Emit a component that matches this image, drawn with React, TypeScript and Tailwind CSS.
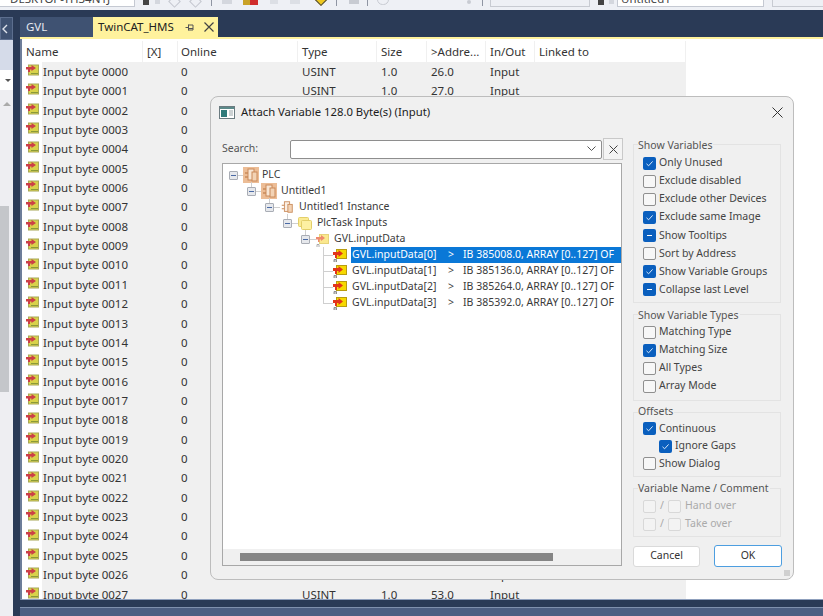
const font = "font-['Noto_Sans','Open_Sans',sans-serif]"

function VarIcon({ className = "" }: { className?: string }) {
  return (
    <svg width="13" height="12" viewBox="0 0 13 12" className={className}>
      <rect x="2.500" y="1" width="10" height="10" fill="#d8d24a" stroke="#a8a858" strokeWidth="1" />
      <path d="M0 3h5.500V1l4.500 3-4.500 3V5.500H4V8H2V5.500H0z" fill="#cc3f46" />
      <path d="M5 9.500h7" stroke="#8a9a38" strokeWidth="1" />
    </svg>
  )
}

function TreeVarIcon() {
  return (
    <svg width="14" height="16" viewBox="0 0 14 16" className="shrink-0">
      <rect x="3.500" y="2.500" width="10" height="9" fill="#f6d800" stroke="#b89c10" strokeWidth="1" />
      <path d="M0 5h5.500V3L10 6.500 5.500 10V8H4v3H2V8H0z" fill="#e2341a" />
      <path d="M1 15v-2.500h2.500V15M1 14h2.500" stroke="#777" strokeWidth="0.800" fill="none" />
    </svg>
  )
}

function Expander({ stem }: { stem?: boolean }) {
  return (
    <span className="relative flex h-[9px] w-[9px] shrink-0 items-center justify-center rounded-[1px] border border-[#a9adb5] bg-[#e6e8ec]">
      <span className="h-px w-[5px] bg-[#4a6aa5]" />
      {stem && <span className="absolute -top-[6px] left-[3px] h-[5px] w-px bg-[#cfcfcf]" />}
    </span>
  )
}

function Link({ w }: { w: string }) {
  return <span className={`h-px shrink-0 bg-[#cfcfcf] ${w}`} />
}

function PlcIcon({ size, faded }: { size: number; faded?: boolean }) {
  return (
    <svg width={size} height={size} viewBox="0 0 16 16" className="shrink-0">
      {!faded && <rect width="16" height="16" fill="#ecbd96" />}
      <rect x="5" y="2" width="6" height="11" fill={faded ? "#fbeee2" : "#f8e6d4"} stroke="#c98a5a" strokeWidth="1" />
      <rect x="9" y="5" width="5" height="9" fill="#f3d3b5" stroke="#c98a5a" strokeWidth="1" />
      <path d="M2 6h3M2 10h3" stroke="#c98a5a" strokeWidth="1.400" />
    </svg>
  )
}

function Check({ state, disabled }: { state?: "check" | "dash"; disabled?: boolean }) {
  if (state) {
    return (
      <span className="flex h-[13px] w-[13px] shrink-0 items-center justify-center rounded-[2px] bg-[#0a5fbe]">
        {state === "check" ? (
          <svg width="9" height="9" viewBox="0 0 9 9">
            <path d="M1.500 4.800 3.600 6.800 7.600 2.400" fill="none" stroke="#d8e8fa" strokeWidth="1" />
          </svg>
        ) : (
          <span className="h-px w-[5px] bg-white" />
        )}
      </span>
    )
  }
  return <span className={`h-[13px] w-[13px] shrink-0 rounded-[2px] border ${disabled ? "border-[#d8d8d8] bg-[#f3f3f3]" : "border-[#8f8f8f] bg-[#f7f7f7]"}`} />
}

function Option({ label, state, indent, h = "h-[18.1px]" }: { label: string; state?: "check" | "dash"; indent?: boolean; h?: string }) {
  return (
    <div className={`flex items-center gap-[3px] ${h} ${indent ? "pl-[16px]" : ""}`}>
      <Check state={state} />
      <span className="whitespace-nowrap">{label}</span>
    </div>
  )
}

function Group({ title, className, top = "-top-[8px]", children }: { title: string; className: string; top?: string; children: React.ReactNode }) {
  return (
    <div className={`relative w-[148px] border border-[#e3e3e3] pl-[9px] ${className}`}>
      <span className={`absolute left-[4px] bg-[#f0f0f0] pr-[1px] leading-[15px] whitespace-nowrap text-[#555] ${top}`}>{title}</span>
      {children}
    </div>
  )
}

const columns = [
  { label: "Name", w: "w-[121px]", pl: "pl-[4px]" },
  { label: "[X]", w: "w-[35px]", pl: "pl-[4px]" },
  { label: "Online", w: "w-[120px]", pl: "pl-[3px]" },
  { label: "Type", w: "w-[79px]", pl: "pl-[4px]" },
  { label: "Size", w: "w-[50px]", pl: "pl-[4px]" },
  { label: ">Addre...", w: "w-[59px]", pl: "pl-[4px]" },
  { label: "In/Out", w: "w-[49px]", pl: "pl-[4px]" },
  { label: "Linked to", w: "w-[151px]", pl: "pl-[4px]" },
]

const rows = Array.from({ length: 28 }, (_, i) => i)

const treeVars = [
  { addr: "385008.0", idx: 0 },
  { addr: "385136.0", idx: 1 },
  { addr: "385264.0", idx: 2 },
  { addr: "385392.0", idx: 3 },
]

function AttachDialog() {
  return (
    <div className="absolute left-[210px] top-[96px] h-[484px] w-[584px] rounded-[8px] border border-[#bdbdbd] bg-[#f0f0f0] text-[10.5px] text-[#444]">
      {/* title */}
      <div className="flex h-[31px] items-center pl-[8px] text-[11.3px] text-[#1c1c1c]">
        <svg width="16" height="13" viewBox="0 0 16 13" className="mr-[6px]">
          <rect x="0.500" y="0.500" width="15" height="12" fill="#fff" stroke="#6b7b80" />
          <rect x="1" y="1" width="14" height="2" fill="#5c8a8a" />
          <rect x="2" y="4" width="6" height="7" fill="#2f7a7a" />
          <path d="M10 5h4M10 7h4M10 9h4" stroke="#9aa5a8" />
        </svg>
        Attach Variable 128.0 Byte(s) (Input)
        <svg width="11" height="11" viewBox="0 0 11 11" className="ml-auto mr-[10px]">
          <path d="M0.500 0.500l10 10M10.500 0.500l-10 10" stroke="#333" strokeWidth="1" />
        </svg>
      </div>
      <div className="flex pl-[11px] pt-[10px]">
        {/* left column */}
        <div className="w-[401px] shrink-0">
          <div className="flex items-center">
            <span className="w-[68px] text-[#555]">Search:</span>
            <div className="flex h-[19px] w-[313px] items-center justify-end rounded-[2px] border border-[#8e8e8e] bg-white pr-[5px]">
              <svg width="9" height="6" viewBox="0 0 9 6">
                <path d="M0.500 0.500 4.500 4.500 8.500 0.500" fill="none" stroke="#555" />
              </svg>
            </div>
            <div className="ml-[1px] flex h-[22px] w-[20px] items-center justify-center border border-[#c9c9c9] bg-[#f4f4f4]">
              <svg width="9" height="9" viewBox="0 0 9 9">
                <path d="M0.500 0.500l8 8M8.500 0.500l-8 8" stroke="#444" />
              </svg>
            </div>
          </div>
          {/* tree */}
          <div className="mt-[3px] h-[403px] w-[400px] border border-[#a8a8a8] bg-white text-[#3a3a3a]">
            <div className="h-[385px] pt-[3px]">
              <div className="flex h-[16px] items-center pl-[6px]">
                <Expander /><Link w="w-[5px]" /><PlcIcon size={16} /><span className="ml-[3px]">PLC</span>
              </div>
              <div className="flex h-[16px] items-center pl-[24px]">
                <Expander stem /><Link w="w-[5px]" /><PlcIcon size={16} /><span className="ml-[4px]">Untitled1</span>
              </div>
              <div className="flex h-[16px] items-center pl-[42px]">
                <Expander stem /><Link w="w-[6px]" /><PlcIcon size={14} faded /><span className="ml-[5px]">Untitled1 Instance</span>
              </div>
              <div className="flex h-[16px] items-center pl-[60px]">
                <Expander stem /><Link w="w-[6px]" />
                <svg width="14" height="13" viewBox="0 0 14 13" className="shrink-0">
                  <rect x="0.500" y="0.500" width="10" height="9" rx="1" fill="#fbeb94" stroke="#e3cf6a" />
                  <rect x="3.500" y="3.500" width="10" height="9" rx="1" fill="#fdf0a2" stroke="#e3cf6a" />
                </svg>
                <span className="ml-[5px]">PlcTask Inputs</span>
              </div>
              <div className="flex h-[16px] items-center pl-[78px]">
                <Expander stem /><Link w="w-[6px]" />
                <svg width="13" height="15" viewBox="0 0 13 15" className="shrink-0">
                  <rect x="3.500" y="2.500" width="9" height="9" fill="#fbe88e" stroke="#e6d47a" />
                  <path d="M0 5h5V3l4 3-4 3V7.500H3.500V10H2V7.500H0z" fill="#ee8a6e" />
                  <path d="M1 15v-2.500h2V15" stroke="#999" strokeWidth="0.800" fill="none" />
                </svg>
                <span className="ml-[5px]">GVL.inputData</span>
              </div>
              {treeVars.map((v) => (
                <div key={v.idx} className="relative flex h-[16px] items-center pl-[110px]">
                  <span className={`absolute left-[100px] top-0 w-px bg-[#cfcfcf] ${v.idx === 3 ? "h-[8px]" : "h-[16px]"}`} />
                  <span className="absolute left-[100px] top-[8px] h-px w-[10px] bg-[#cfcfcf]" />
                  <TreeVarIcon />
                  <span className={`ml-[4px] flex h-[16px] w-[270px] items-center whitespace-nowrap pl-[1px] ${v.idx === 0 ? "bg-[#0a78d7] text-white" : ""}`}>
                    <span className="w-[96px]">GVL.inputData[{v.idx}]</span>
                    <span className="w-[15px]">&gt;</span>
                    <span>IB {v.addr}, ARRAY [0..127] OF</span>
                  </span>
                </div>
              ))}
            </div>
            <div className="flex h-[16px] items-center bg-[#f0f0f0] pl-[17px]">
              <div className="h-[8px] w-[313px] bg-[#858585]" />
            </div>
          </div>
        </div>
        {/* right column */}
        <div className="ml-[10px] w-[148px] shrink-0 pt-[6px]">
          <Group title="Show Variables" top="-top-[7px]" className="h-[159px] pt-[9px]">
            <Option label="Only Unused" state="check" />
            <Option label="Exclude disabled" />
            <Option label="Exclude other Devices" />
            <Option label="Exclude same Image" state="check" />
            <Option label="Show Tooltips" state="dash" />
            <Option label="Sort by Address" />
            <Option label="Show Variable Groups" state="check" />
            <Option label="Collapse last Level" state="dash" />
          </Group>
          <Group title="Show Variable Types" top="-top-[7px]" className="mt-[11px] h-[87px] pt-[8px]">
            <Option label="Matching Type" />
            <Option label="Matching Size" state="check" />
            <Option label="All Types" />
            <Option label="Array Mode" />
          </Group>
          <Group title="Offsets" top="-top-[9px]" className="mt-[11px] h-[65px] pt-[7px]">
            <Option label="Continuous" state="check" h="h-[17.5px]" />
            <Option label="Ignore Gaps" state="check" indent h="h-[17.5px]" />
            <Option label="Show Dialog" h="h-[17.5px]" />
          </Group>
          <Group title="Variable Name / Comment" className="mt-[11px] h-[49px] pt-[8px] text-[#aaa]">
            {["Hand over", "Take over"].map((t) => (
              <div key={t} className="flex h-[18px] items-center">
                <Check disabled />
                <span className="w-[12px] text-center">/</span>
                <Check disabled />
                <span className="ml-[4px]">{t}</span>
              </div>
            ))}
          </Group>
          <div className="mt-[8px] flex items-center gap-[14px] text-[#333]">
            <div className="flex h-[21px] w-[67px] shrink-0 items-center justify-center rounded-[3px] border border-[#dadada] bg-white">Cancel</div>
            <div className="flex h-[22px] w-[68px] shrink-0 items-center justify-center rounded-[3px] border border-[#4d9ee0] bg-white">OK</div>
          </div>
        </div>
      </div>
      {/* resize grip */}
      <div className="absolute bottom-[3px] right-[3px] h-[6px] w-[6px] bg-[#d0d0d0]" />
    </div>
  )
}

function Sep({ ml }: { ml: string }) {
  return <span className={`h-[6px] w-px shrink-0 bg-[#8f95a3] ${ml}`} />
}

export default function App() {
  return (
    <div className={`relative flex h-[616px] w-[823px] flex-col overflow-hidden bg-[#2a3a56] text-[11.5px] text-[#333] ${font}`}>
      {/* toolbar strip, cut off at the top of the window */}
      <div className="flex h-[10px] shrink-0 items-start overflow-hidden bg-[#eef0f5] text-[#444]">
        <div className="h-[7px] w-[135px] shrink-0 overflow-hidden border-r border-b border-[#c5c9d2] bg-white pl-[10px]">
          <div className="-mt-[9px] whitespace-nowrap leading-[16px]">DESKTOP-TH34N1J</div>
        </div>
        <span className="ml-[8px] h-[5px] w-[6px] shrink-0 bg-[#444]" />
        <span className="ml-[6px] h-[4px] w-[5px] shrink-0 bg-[#d4d7de]" />
        <span className="-mt-[3px] ml-[10px] h-[9px] w-[9px] shrink-0 rotate-45 border border-[#c4c7cf]" />
        <span className="-mt-[3px] ml-[12px] h-[9px] w-[9px] shrink-0 rotate-45 border border-[#c4c7cf]" />
        <Sep ml="ml-[11px]" />
        <span className="ml-[10px] h-[4px] w-[10px] shrink-0 bg-[#d4d7de]" />
        <span className="ml-[11px] h-[5px] w-[7px] shrink-0 bg-[#c9a227]" />
        <span className="h-[5px] w-[8px] shrink-0 bg-[#d02c2c]" />
        <span className="ml-[12px] h-[4px] w-[8px] shrink-0 bg-[#dcdfe5]" />
        <span className="ml-[12px] h-[4px] w-[10px] shrink-0 bg-[#dcdfe5]" />
        <span className="-mt-[6px] ml-[16px] h-[10px] w-[10px] shrink-0 rotate-45 border border-[#444] bg-[#efc81e]" />
        <Sep ml="ml-[10px]" />
        <span className="ml-[12px] h-[4px] w-[10px] shrink-0 bg-[#c8cbd2]" />
        <Sep ml="ml-[8px]" />
        <span className="-mt-[6px] ml-[9px] h-[11px] w-[12px] shrink-0 rounded-full border border-[#c8cbd2]" />
        <span className="ml-[78px] h-[4px] w-[4px] shrink-0 rounded-full bg-[#c8cbd2]" />
        <Sep ml="ml-[11px]" />
        <div className="ml-[7px] h-[7px] w-[100px] shrink-0 border-x border-b border-[#c8cbd2]" />
        <span className="ml-[8px] h-[5px] w-[6px] shrink-0 bg-[#444]" />
        <span className="ml-[5px] h-[4px] w-[5px] shrink-0 bg-[#d4d7de]" />
        <div className="ml-[3px] h-[7px] w-[147px] shrink-0 overflow-hidden border-x border-b border-[#c5c9d2] bg-white pl-[3px]">
          <div className="-mt-[9px] leading-[16px]">Untitled1</div>
        </div>
        <div className="ml-[8px] h-[7px] flex-1 border-l border-b border-[#c8cbd2]" />
      </div>

      <div className="flex min-h-0 flex-1">
        {/* collapsed side panel */}
        <div className="mt-[7px] flex h-[599px] w-[13px] shrink-0 flex-col bg-[#eeeef2] text-[#555]">
          <div className="flex h-[23px] items-center border border-[#5c6e8e] bg-[#3f5272]">
            <svg width="6" height="10" viewBox="0 0 6 10" className="ml-[1px]">
              <path d="M5 1 1 5l4 4" fill="none" stroke="#dfe4ec" strokeWidth="1.400" />
            </svg>
          </div>
          <div className="h-[30px] bg-[#d5dbe9]" />
          <div className="flex h-[20px] items-center justify-end bg-white pr-[2px]">
            <span className="h-0 w-0 border-x-[3px] border-t-[3px] border-x-transparent border-t-[#555]" />
          </div>
          <div className="mt-[10px] flex h-[8px] items-center justify-end pr-[2px]">
            <span className="h-0 w-0 border-x-[4px] border-b-[4px] border-x-transparent border-b-[#aaa]" />
          </div>
          <div className="mt-[98px] h-[186px] w-[9px] bg-[#c4c6ca]" />
        </div>

        {/* document well */}
        <div className="ml-[7px] flex min-w-0 flex-1 flex-col">
          <div className="flex h-[27px] shrink-0 items-end">
            <div className="flex h-[20px] w-[73px] items-center bg-[#3f5272] pl-[6px] text-[#e4e8ef]">GVL</div>
            <div className="flex h-[20px] w-[125px] items-center bg-[#fff29d] pl-[5px] text-[#222]">
              TwinCAT_HMS
              <svg width="9" height="9" viewBox="0 0 9 9" className="ml-[11px] shrink-0">
                <path d="M0.500 4.500h3M3.500 1.500v6M3.500 2h4.500v5h-4.500M3.500 5.500h4.500" fill="none" stroke="#555" />
              </svg>
              <svg width="10" height="10" viewBox="0 0 10 10" className="ml-[10px] shrink-0">
                <path d="M0.500 0.500l9 9M9.500 0.500l-9 9" stroke="#444" strokeWidth="1.200" />
              </svg>
            </div>
          </div>
          <div className="h-[2px] shrink-0 bg-[#fff29d]" />
          <div className="h-[561px] shrink-0 overflow-hidden border-b border-[#8fa0bd] border-l-2 border-l-[#6d7d99] bg-white pt-[2px]">
            <div className="flex h-[20.8px]">
              {columns.map((c, i) => (
                <div key={i} className={`flex items-center whitespace-nowrap border-r border-[#f0f0f0] ${c.w} ${c.pl}`}>{c.label}</div>
              ))}
            </div>
            {rows.map((i) => (
              <div key={i} className="flex h-[19.36px] w-[664px] items-center bg-[#f0f0f0] whitespace-nowrap">
                <div className="flex h-full w-[121px] items-center bg-[linear-gradient(to_right,white_20px,#f0f0f0_20px)] pl-[4px]">
                  <VarIcon className="-mt-[3px] shrink-0" />
                  <span className="ml-[4px]">Input byte {String(i).padStart(4, "0")}</span>
                </div>
                <div className="w-[35px]" />
                <div className="w-[120px] pl-[3px]">0</div>
                <div className="w-[79px] pl-[4px]">USINT</div>
                <div className="w-[50px] pl-[4px]">1.0</div>
                <div className="w-[59px] pl-[4px]">{26 + i}.0</div>
                <div className="w-[49px] pl-[4px]">Input</div>
              </div>
            ))}
          </div>
        </div>
      </div>

      {/* status area */}
      <div className="absolute bottom-0 left-[20px] right-0 h-[9px] border-t border-[#7f90ad] bg-[#4d5f82]" />

      <AttachDialog />
    </div>
  )
}
